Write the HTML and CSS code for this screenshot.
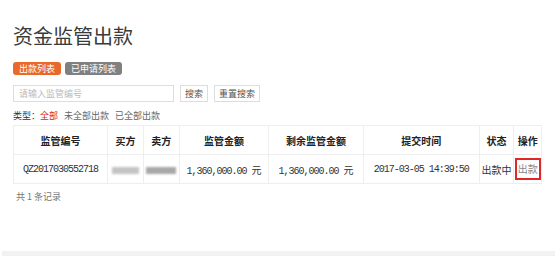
FILE: index.html
```html
<!DOCTYPE html>
<html lang="zh-CN">
<head>
  <meta charset="UTF-8">
  <title>资金监管出款</title>
  <link rel="stylesheet" href="styles.css">
</head>
<body>

<div class="page">
  <h1 class="title">资金监管出款</h1>

  <div class="tabs">
    <span class="tab active">出款列表</span>
    <span class="tab">已申请列表</span>
  </div>

  <div class="search">
    <input class="search-input" type="text" placeholder="请输入监管编号">
    <button class="btn">搜索</button>
    <button class="btn">重置搜索</button>
  </div>

  <div class="filter">
    <span class="label">类型：</span><a class="on">全部</a>
    <a>未全部出款</a>
    <a>已全部出款</a>
  </div>

  <table class="list">
    <thead>
      <tr>
        <th class="c-no">监管编号</th>
        <th class="c-name">买方</th>
        <th class="c-name">卖方</th>
        <th class="c-amt">监管金额</th>
        <th class="c-left">剩余监管金额</th>
        <th class="c-time">提交时间</th>
        <th class="c-st">状态</th>
        <th class="c-op">操作</th>
      </tr>
    </thead>
    <tbody>
      <tr>
        <td class="mono">QZ2017030552718</td>
        <td><span class="blur"></span></td>
        <td><span class="blur dark"></span></td>
        <td class="mono">1,360,000.00 <span class="cn">元</span></td>
        <td class="mono">1,360,000.00 <span class="cn">元</span></td>
        <td class="mono">2017-03-05 14:39:50</td>
        <td>出款中</td>
        <td><a class="op">出款</a></td>
      </tr>
    </tbody>
  </table>

  <p class="total">共&nbsp;1&nbsp;条记录</p>
</div>

<div class="bottom-bar"></div>

</body>
</html>
```

FILE: styles.css
```css
body {
  margin: 0;
  background: #ffffff;
  font-family: "Noto Sans CJK SC", "Liberation Sans", sans-serif;
  color: #333;
  font-size: 10px;
}

.page {
  padding: 24px 13px 0 13px;
  height: 227px;
}

.title {
  margin: 0;
  font-size: 20px;
  font-weight: normal;
  line-height: 24px;
  color: #3a3a3a;
}

.tabs {
  display: flex;
  gap: 4px;
  margin-top: 14px;
}

.tab {
  background: #808080;
  color: #fff;
  font-size: 9px;
  line-height: 13px;
  padding: 0 6px;
  border-radius: 3px;
}

.tab.active {
  background: #e8692a;
}

.search {
  display: flex;
  align-items: center;
  margin-top: 10px;
  height: 17px;
}

.search-input {
  box-sizing: border-box;
  width: 161px;
  height: 17px;
  border: 1px solid #ddd;
  padding: 0 5px;
  font-family: "Noto Sans CJK SC", sans-serif;
  font-size: 9px;
  outline: none;
}

.search-input::placeholder {
  color: #bbb;
}

.btn {
  box-sizing: border-box;
  height: 17px;
  margin-left: 6px;
  padding: 0 4px;
  background: #fff;
  border: 1px solid #ddd;
  font-family: "Noto Sans CJK SC", sans-serif;
  font-size: 9px;
  color: #555;
}

.filter {
  margin-top: 7px;
  line-height: 14px;
  font-size: 9px;
  color: #666;
}

.filter .label {
  color: #333;
}

.filter a {
  margin-right: 4px;
}

.filter a.on {
  color: #e41b1b;
}

.list {
  margin-top: 2px;
  border-collapse: collapse;
  width: 529px;
}

.list th,
.list td {
  border: 1px solid #eee;
  text-align: center;
  height: 28px;
  padding: 0;
  font-size: 10px;
}

.list th {
  font-weight: bold;
  color: #222;
}

.list td {
  color: #333;
}

.c-no { width: 94px; }
.c-name { width: 35px; }
.c-amt { width: 90px; }
.c-left { width: 95px; }
.c-time { width: 118px; }
.c-st { width: 35px; }
.c-op { width: 27px; }

.mono {
  font-family: "Liberation Mono", monospace;
  letter-spacing: -1px;
}

.mono .cn {
  font-family: "Noto Sans CJK SC", sans-serif;
  letter-spacing: 0;
}

.blur {
  display: inline-block;
  width: 27px;
  height: 7px;
  background: #c4c4c4;
  filter: blur(1px);
  vertical-align: middle;
}

.blur.dark {
  width: 30px;
  background: #a8a8a8;
}

.op {
  display: inline-block;
  color: #888;
  border: 2px solid #e02828;
  padding: 2px 1px;
  line-height: 14px;
}

.total {
  margin: 6px 0 0 3px;
  font-size: 9px;
  color: #777;
}

.bottom-bar {
  margin: 0 2px;
  height: 5px;
  background: #f2f2f2;
}
```
